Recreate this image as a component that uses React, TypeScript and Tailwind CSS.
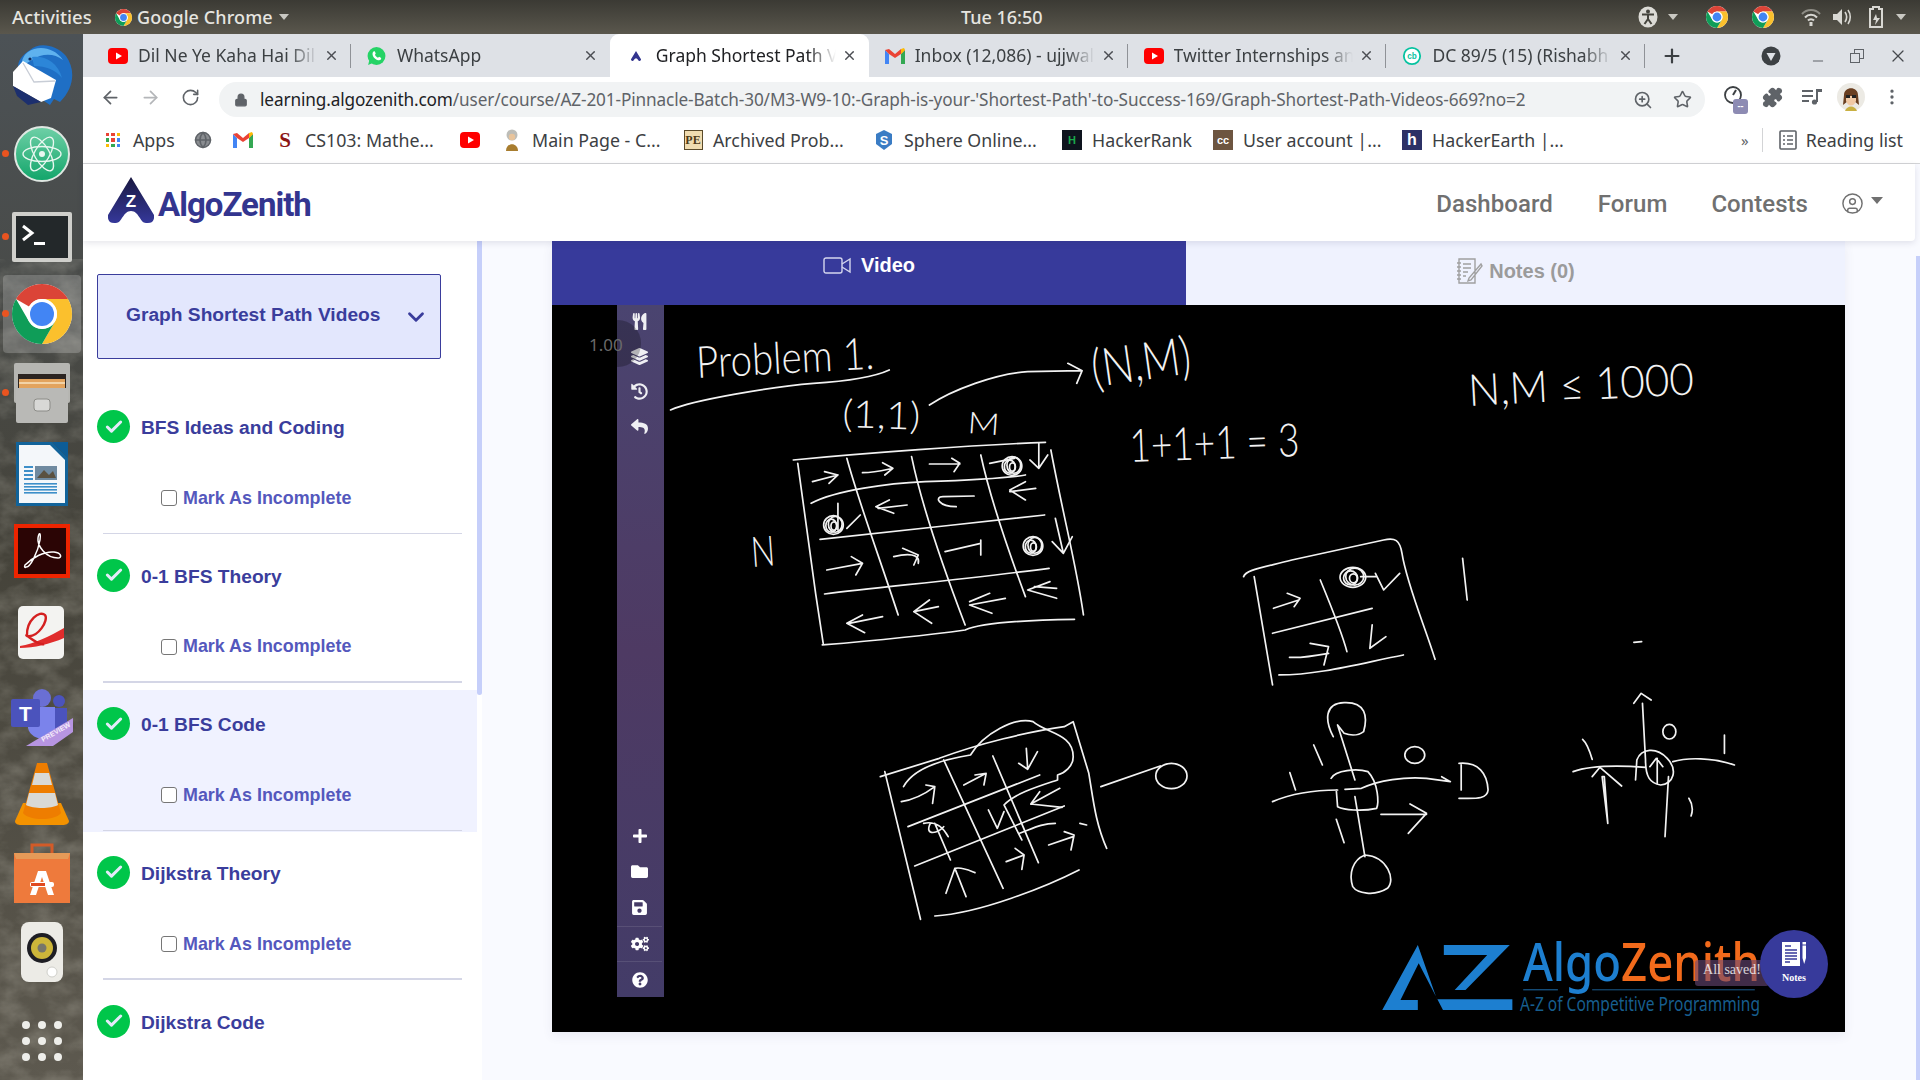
import React from 'react';
import { ArrowLeft, ArrowRight, RotateCw, Lock, ZoomIn, Star, Puzzle, MoreVertical, Globe, Check, X, Plus, ChevronDown, CircleUser, Minus } from 'lucide-react';
import { FaUtensils, FaLayerGroup, FaHistory, FaReply, FaPlus, FaFolder, FaSave, FaCogs, FaQuestionCircle } from 'react-icons/fa';

const ChromeLogo = ({ size = 20 }: { size?: number }) => (
  <svg width={size} height={size} viewBox="4 4 40 40">
    <circle cx="24" cy="24" r="20" fill="#fff" />
    <path d="M6.68 14A20 20 0 0 1 41.32 14H24A10 10 0 0 0 15.34 19Z" fill="#db4437" />
    <path d="M41.32 14A20 20 0 0 1 24 44L32.66 29A10 10 0 0 0 24 14Z" fill="#fbc02d" />
    <path d="M24 44A20 20 0 0 1 6.68 14L15.34 29A10 10 0 0 0 32.66 29Z" fill="#0f9d58" />
    <circle cx="24" cy="24" r="10" fill="#fff" />
    <circle cx="24" cy="24" r="8" fill="#4285f4" />
  </svg>
);
const YouTube = () => (
  <svg width="20" height="20" viewBox="0 0 20 20"><rect x="0" y="2" width="20" height="16" rx="4" fill="#f00" /><path d="M8 6.5 14 10 8 13.5Z" fill="#fff" /></svg>
);
const Gmail = () => (
  <svg width="20" height="16" viewBox="0 0 20 16"><path d="M0 2V16H4V6Z" fill="#4285f4" /><path d="M20 2V16H16V6Z" fill="#34a853" /><path d="M16 1 20 2 16 6 10 10 4 6 0 2 4 1 10 6Z" fill="#ea4335" /><path d="M16 1 19 0 20 2 16 6Z" fill="#fbbc04" /></svg>
);
const Whatsapp = () => (
  <svg width="19" height="20" viewBox="0 0 20 20"><circle cx="10" cy="10" r="9.4" fill="#25d366" /><path d="M1.2 19.5 2.6 14 6 17.4Z" fill="#25d366" /><path d="M6.8 5.2 8.2 5 9.2 7.4 8.4 8.6C9 10 10.2 11.2 11.6 11.8L12.7 10.8 15 12 14.6 13.6C13.4 15 11 14.6 8.6 12.8 6.2 11 4.8 7.4 6.8 5.2Z" fill="#fff" /></svg>
);
const AMark = () => (
  <svg width="10" height="12" viewBox="0 0 46 47"><path d="M23 0 0 38Q-1 47 8 46C14 46 15 34 23 34 31 34 32 46 38 46Q47 47 46 38Z" fill="#33358f" /></svg>
);
const CB = () => (
  <svg width="22" height="22" viewBox="0 0 22 22"><circle cx="11" cy="11" r="9" fill="#fff" stroke="#06c2a0" strokeWidth="2" /><text x="11" y="14" textAnchor="middle" fontSize="9" fontWeight="700" fill="#06c2a0" fontFamily="Liberation Sans">cb</text></svg>
);

const tabs = [
  { icon: <YouTube />, t: 'Dil Ne Ye Kaha Hai Dil Se', sep: true },
  { icon: <Whatsapp />, t: 'WhatsApp', sep: false },
  { icon: <AMark />, t: 'Graph Shortest Path Videos', active: true, sep: false },
  { icon: <Gmail />, t: 'Inbox (12,086) - ujjwal', sep: true },
  { icon: <YouTube />, t: 'Twitter Internships and', sep: true },
  { icon: <CB />, t: 'DC 89/5 (15) (Rishabh Pant', sep: true },
];

const TopBar = () => (
  <div className="h-[34px] shrink-0 flex items-center bg-gradient-to-b from-[#3b3a34] to-[#5a574d] text-[#e6e5e0] text-[18px] font-medium relative">
    <span className="ml-[12px] w-[103px] text-[18.5px]">Activities</span>
    <ChromeLogo size={17} />
    <span className="ml-[5px] tracking-[0.1px]">Google Chrome</span>
    <svg width="10" height="6" className="ml-[6px]" viewBox="0 0 10 6"><path d="M0 0H10L5 6Z" fill="#c9c8c2" /></svg>
    <span className="absolute left-[961px] top-[4px]">Tue 16:50</span>
    <div className="ml-auto flex items-center pr-[14px]">
      <svg width="20" height="22" viewBox="0 0 20 22"><ellipse cx="10" cy="11" rx="9.5" ry="10.5" fill="#dcdbd6" /><circle cx="10" cy="5.5" r="2" fill="#45443d" /><path d="M4 8.5H16M10 8.5V13L6.5 18M10 13 13.5 18" stroke="#45443d" strokeWidth="2" fill="none" /></svg>
      <svg width="10" height="6" className="ml-[10px]" viewBox="0 0 10 6"><path d="M0 0H10L5 6Z" fill="#c9c8c2" /></svg>
      <div className="ml-[28px]"><ChromeLogo size={22} /></div>
      <div className="ml-[24px]"><ChromeLogo size={22} /></div>
      <svg width="20" height="20" className="ml-[27px]" viewBox="0 0 20 20"><path d="M1 7A12 12 0 0 1 19 7" stroke="#8e8d86" strokeWidth="2" fill="none" /><path d="M4 10.5A8 8 0 0 1 16 10.5" stroke="#d9d8d3" strokeWidth="2" fill="none" /><path d="M7 13.5A4 4 0 0 1 13 13.5" stroke="#d9d8d3" strokeWidth="2" fill="none" /><rect x="8.5" y="15" width="3" height="4" fill="#d9d8d3" /></svg>
      <svg width="20" height="20" className="ml-[11px]" viewBox="0 0 20 20"><path d="M1 7H5L10 2V18L5 13H1Z" fill="#d9d8d3" /><path d="M13 5C15 8 15 12 13 15M16 3C19 7 19 13 16 17" stroke="#d9d8d3" strokeWidth="1.6" fill="none" /></svg>
      <svg width="18" height="24" className="ml-[15px]" viewBox="0 0 18 24"><path d="M6 2H12V4H15V22H3V4H6Z" fill="none" stroke="#d9d8d3" strokeWidth="2" /><path d="M9 9 6 15H9L8 20 13 13H10Z" fill="#d9d8d3" /></svg>
      <svg width="10" height="6" className="ml-[11px]" viewBox="0 0 10 6"><path d="M0 0H10L5 6Z" fill="#c9c8c2" /></svg>
    </div>
  </div>
);

const Slot = ({ children, dot, cls = '' }: { children: React.ReactNode; dot?: boolean; cls?: string }) => (
  <div className={`h-[80px] shrink-0 w-full flex items-center justify-center relative ${cls}`}>
    {dot && <span className="absolute left-[2px] top-[36px] w-[7px] h-[7px] rounded-full bg-[#e95420]" />}
    {children}
  </div>
);

const Dock = () => (
  <div className="w-[83px] shrink-0 relative overflow-hidden bg-gradient-to-b from-[#4c5256] via-[#45433a] to-[#5d594f]">
    <svg className="absolute inset-0 opacity-30" width="83" height="1046">
      <filter id="rock"><feTurbulence type="fractalNoise" baseFrequency="0.035 0.05" numOctaves="4" seed="8" /><feColorMatrix values="0 0 0 0 .62 0 0 0 0 .60 0 0 0 0 .52 1.6 0 0 0 -.55" /></filter>
      <rect y="300" width="83" height="746" filter="url(#rock)" />
    </svg>
    <div className="relative flex flex-col items-center">
      <Slot>
        <svg width="64" height="64" viewBox="0 0 64 64">
          <path d="M20 8C28 0 46 2 56 14 66 28 64 46 50 60L44 57 40 63 34 59 10 30C4 20 14 12 20 8Z" fill="#1f6fc5" />
          <path d="M18 10C28 3 44 5 53 18 44 11 32 11 22 18L12 24C11 18 14 13 18 10Z" fill="#5fb2ee" />
          <path d="M22 15C34 13 48 20 52 36 46 28 36 24 24 24Z" fill="#2c86d8" />
          <circle cx="20" cy="17" r="1.6" fill="#10285c" />
          <path d="M3 30 13 19 46 38 41 56 31 60 3 44Z" fill="#fff" />
          <path d="M13 21 24 40 45 39" fill="none" stroke="#c8cdd6" strokeWidth="1.3" />
          <path d="M3 44 31 60 18 63 7 54Z" fill="#1c2f6e" />
        </svg>
      </Slot>
      <Slot dot>
        <svg width="56" height="56" viewBox="0 0 56 56">
          <defs><linearGradient id="atomg" x1="0" y1="0" x2="0" y2="1"><stop offset="0" stopColor="#6fd0a7" /><stop offset="1" stopColor="#12a56a" /></linearGradient></defs>
          <circle cx="28" cy="28" r="27" fill="url(#atomg)" stroke="#dfe7e2" strokeWidth="2" />
          <g fill="none" stroke="#e9f7f0" strokeWidth="1.4"><ellipse cx="28" cy="28" rx="19" ry="7.5" transform="rotate(60 28 28)" /><ellipse cx="28" cy="28" rx="19" ry="7.5" transform="rotate(-60 28 28)" /><ellipse cx="28" cy="28" rx="19" ry="7.5" /></g>
          <circle cx="28" cy="28" r="3" fill="#e9f7f0" />
        </svg>
      </Slot>
      <Slot dot cls="top-[3px]">
        <svg width="60" height="50" viewBox="0 0 60 50">
          <rect x="0" y="0" width="60" height="50" rx="2" fill="#cfcfcb" /><rect x="4" y="4" width="52" height="42" fill="#23282a" />
          <path d="M11 14 20 21 11 28" fill="none" stroke="#fff" strokeWidth="3" /><rect x="22" y="30" width="11" height="3" fill="#fff" />
        </svg>
      </Slot>
      <Slot dot>
        <div className="w-[78px] h-[78px] rounded-[4px] bg-white/20 flex items-center justify-center"><ChromeLogo size={60} /></div>
      </Slot>
      <Slot dot cls="-top-[1px]">
        <svg width="56" height="60" viewBox="0 0 56 60">
          <rect x="0" y="0" width="56" height="40" rx="2" fill="#b6b6b2" /><rect x="4" y="11" width="48" height="16" fill="#2c2521" />
          <rect x="5" y="16" width="46" height="12" fill="#e2a35d" /><path d="M5 20H51" stroke="#f7e3c0" strokeWidth="1.5" /><rect x="2" y="25" width="52" height="35" rx="2" fill="#b9b9b6" />
          <rect x="20" y="36" width="16" height="12" rx="3" fill="#d8d8d6" stroke="#8c8c88" />
        </svg>
      </Slot>
      <Slot>
        <svg width="52" height="64" viewBox="0 0 52 64">
          <path d="M0 0H36L52 16V64H0Z" fill="#12639a" /><path d="M3 3H34L49 18V61H3Z" fill="#f4f7fa" />
          <path d="M36 0H52V16Z" fill="#0d5c96" />
          <path d="M19 24H41V38H19Z" fill="#6f8aa0" /><path d="M21 36 28 28 33 33 37 29 40 36Z" fill="#5a5140" />
          {[24, 28, 32, 36].map((y) => <rect key={y} x="8" y={y} width="9" height="2" fill="#3d8fc9" />)}
          {[41, 44, 47, 50].map((y) => <rect key={y} x="8" y={y} width="33" height="1.6" fill="#3d8fc9" />)}
        </svg>
      </Slot>
      <Slot cls="-top-[3px]">
        <svg width="56" height="54" viewBox="0 0 56 54">
          <rect width="56" height="54" fill="#ee2400" /><rect x="4" y="4" width="48" height="46" fill="#2b0505" />
          <path d="M12 43C16 44 24 28 26 16 27 8 25 8 24 14 23 22 32 34 44 34 48 34 48 29 40 28 30 27 18 34 11 41 10 43 11 44 12 43Z" fill="none" stroke="#fff" strokeWidth="1.5" />
        </svg>
      </Slot>
      <Slot cls="-top-[1px]">
        <svg width="48" height="54" viewBox="0 0 48 54">
          <rect width="46" height="53" rx="5" fill="#f3f3f1" /><path d="M2 40C16 38 32 30 46 22V32C32 38 16 42 2 42Z" fill="#e02c2c" />
          <path d="M9 30C8 14 22 4 27 9 31 14 20 32 9 30 5 26 20 40 26 38" fill="none" stroke="#d42020" strokeWidth="2.4" />
        </svg>
      </Slot>
      <Slot cls="top-[3px]">
        <svg width="62" height="58" viewBox="0 0 62 58">
          <circle cx="31" cy="10" r="9" fill="#6a6fd4" /><circle cx="48" cy="13" r="6" fill="#4b53bc" />
          <path d="M40 20H56V44H40Z" fill="#4b53bc" /><path d="M17 19H44V44C44 54 20 54 17 40Z" fill="#7b83eb" />
          <rect x="0" y="11" width="29" height="28" rx="2" fill="#4b53bc" /><text x="14.5" y="33" textAnchor="middle" fontSize="21" fontWeight="700" fill="#fff" fontFamily="Liberation Sans">T</text>
          <path d="M15 58 62 30V44L42 58Z" fill="#b795e2" /><text x="0" y="0" fontSize="7" fontWeight="700" fill="#f3ecfb" fontFamily="Liberation Sans" transform="translate(32 54) rotate(-30)">PREVIEW</text>
        </svg>
      </Slot>
      <Slot>
        <svg width="54" height="62" viewBox="0 0 54 62">
          <path d="M0 58 8 40H46L54 58C54 61 50 62 48 62H6C3 62 0 61 0 58Z" fill="#f39200" />
          <path d="M22 0H32L46 50C40 58 14 58 8 50Z" fill="#ee7d00" />
          <path d="M20 10H34L37 22H17Z" fill="#d9d9d6" /><path d="M14 30H40L43 42C36 46 18 46 11 42Z" fill="#d9d9d6" />
        </svg>
      </Slot>
      <Slot cls="-top-[1px]">
        <svg width="56" height="60" viewBox="0 0 56 60">
          <path d="M18 14V2H38V14M18 14V4" fill="none" stroke="#d35b28" strokeWidth="3" />
          <rect y="10" width="56" height="50" fill="#ee7a3c" /><path d="M0 10H56L54 16H2Z" fill="#e59a58" />
          <path d="M16 52 24 28H32L40 52H34L28 34 22 52Z" fill="#fff" /><rect x="16" y="39" width="24" height="5" rx="2" fill="#fff" /><rect x="17" y="40" width="14" height="3" fill="#e04a20" />
        </svg>
      </Slot>
      <Slot cls="-top-[2px]">
        <svg width="42" height="60" viewBox="0 0 42 60">
          <rect width="42" height="60" rx="8" fill="#ecebe6" /><circle cx="21" cy="26" r="15" fill="#1e1e24" /><circle cx="21" cy="26" r="11" fill="#cdb63a" /><circle cx="21" cy="26" r="4.5" fill="#77766a" />
          <circle cx="31" cy="50" r="5" fill="#fff" stroke="#cfcfca" />
        </svg>
      </Slot>
      <Slot cls="top-[7px]">
        <div className="grid grid-cols-3 gap-[8px]">
          {Array.from({ length: 9 }).map((_, i) => <span key={i} className="w-[8px] h-[8px] rounded-full bg-[#eeeeea]" />)}
        </div>
      </Slot>
    </div>
  </div>
);

const Tabs = () => (
  <div className="h-[43px] shrink-0 bg-[#dee1e6] flex items-stretch pl-[9px] text-[#3c4043] text-[17.5px]">
    {tabs.map((tab) => (
      <div key={tab.t} className={`w-[258.9px] shrink-0 flex items-center pl-[16px] pr-[12px] relative ${tab.active ? 'bg-white text-[#202124] rounded-t-[9px]' : ''}`}>
        <span className="w-[20px] h-[20px] flex items-center justify-center shrink-0">{tab.icon}</span>
        <span className="ml-[10px] flex-1 overflow-hidden whitespace-nowrap [mask-image:linear-gradient(to_right,black_84%,transparent)]">{tab.t}</span>
        <X size={15} strokeWidth={2.2} className="ml-[6px] text-[#4a4d52] shrink-0" />
        {tab.sep && <span className="absolute right-0 top-[10px] h-[24px] w-[1px] bg-[#8f9297]" />}
      </div>
    ))}
    <div className="flex items-center pl-[16px]"><Plus size={22} strokeWidth={2.4} className="text-[#3c4043]" /></div>
    <div className="ml-auto flex items-center pr-[12px]">
      <svg width="20" height="20" viewBox="0 0 20 20"><circle cx="10" cy="10" r="9.5" fill="#3c4043" /><path d="M5.5 7H14.5L10 15Z" fill="#dee1e6" /></svg>
      <Minus size={16} className="ml-[29px] text-[#5f6368] mt-[11px]" strokeWidth={1.5} />
      <svg width="14" height="14" className="ml-[24px]" viewBox="0 0 14 14"><rect x="4.5" y="0.5" width="9" height="9" fill="none" stroke="#5f6368" /><rect x="0.5" y="4.5" width="9" height="9" fill="#dee1e6" stroke="#5f6368" /></svg>
      <X size={20} strokeWidth={1.5} className="ml-[24px] text-[#45484d]" />
    </div>
  </div>
);

const Toolbar = () => (
  <div className="h-[40px] shrink-0 bg-white flex items-center relative">
    <ArrowLeft size={21} className="ml-[17px] text-[#5f6368]" />
    <ArrowRight size={21} className="ml-[19px] text-[#b4b6b9]" />
    <RotateCw size={19} className="ml-[20px] text-[#5f6368]" />
    <div className="ml-[19px] w-[1486px] h-[35px] mt-[5px] rounded-full bg-[#f1f3f4] flex items-center">
      <Lock size={14} className="ml-[15px] text-[#5f6368]" fill="#5f6368" />
      <span className="ml-[12px] text-[17.2px] text-[#5f6368] whitespace-nowrap w-[1265px] tracking-[-0.12px] overflow-hidden"><span className="text-[#202124]">learning.algozenith.com</span>/user/course/AZ-201-Pinnacle-Batch-30/M3-W9-10:-Graph-is-your-'Shortest-Path'-to-Success-169/Graph-Shortest-Path-Videos-669?no=2</span>
      <ZoomIn size={20} className="ml-[108px] text-[#5f6368]" />
      <Star size={19} className="ml-[20px] text-[#5f6368]" />
    </div>
    <div className="ml-[18px] relative w-[22px] h-[24px]">
      <svg width="22" height="22" viewBox="0 0 22 22"><circle cx="10" cy="10" r="8" fill="none" stroke="#3c4043" strokeWidth="1.8" /><path d="M10 10 13 5" stroke="#3c4043" strokeWidth="2" /></svg>
      <span className="absolute left-[10px] top-[14px] w-[15px] h-[15px] rounded-[3px] bg-[#8d8bb3] text-white text-[9px] leading-[14px] text-center font-bold">--</span>
    </div>
    <Puzzle size={21} className="ml-[17px] text-[#5f6368]" fill="#5f6368" />
    <svg width="22" height="22" className="ml-[18px]" viewBox="0 0 22 22"><path d="M1 5H12M1 10H12M1 15H8" stroke="#5f6368" strokeWidth="2" /><path d="M16 3V16" stroke="#5f6368" strokeWidth="2" /><circle cx="13.5" cy="16" r="2.6" fill="#5f6368" /><path d="M16 3H21V6H16Z" fill="#5f6368" /></svg>
    <svg width="28" height="28" className="ml-[14px]" viewBox="0 0 28 28"><circle cx="14" cy="14" r="14" fill="#eceae4" /><path d="M7 12C7 3 21 3 21 12L22 22 17 18H11L6 22Z" fill="#6a3f21" /><path d="M9 13H19V18C17 24 11 24 9 18Z" fill="#f1c9a5" /><rect x="9" y="12" width="4" height="3" fill="#222" /><rect x="15" y="12" width="4" height="3" fill="#222" /><path d="M8 28C10 22 18 22 20 28Z" fill="#c9b042" /></svg>
    <MoreVertical size={20} className="ml-[17px] text-[#5f6368]" />
  </div>
);

const BM = ({ icon, t, w }: { icon: React.ReactNode; t?: string; w?: string }) => (
  <div className={`flex items-center gap-[10px] shrink-0 ${w ?? ''}`}>
    <span className="w-[20px] h-[20px] flex items-center justify-center shrink-0">{icon}</span>
    {t && <span className="whitespace-nowrap">{t}</span>}
  </div>
);
const Sq = ({ bg, fg, t, cls = '' }: { bg: string; fg: string; t: string; cls?: string }) => (
  <span className={`w-[20px] h-[20px] flex items-center justify-center text-[11px] font-bold font-['Liberation_Sans',sans-serif] ${cls}`} style={{ background: bg, color: fg }}>{t}</span>
);
const Bookmarks = () => (
  <div className="h-[47px] shrink-0 bg-white border-b border-[#d3d4d6] flex items-center text-[17.8px] text-[#3c4043] pl-[20px]">
    <BM w="w-[90px]" t="Apps" icon={
      <div className="grid grid-cols-3 gap-[2px]">
        {['#ea4335', '#ea4335', '#fbbc04', '#34a853', '#ea4335', '#4285f4', '#fbbc04', '#34a853', '#4285f4'].map((c, i) => <span key={i} className="w-[3.5px] h-[3.5px]" style={{ background: c }} />)}
      </div>} />
    <BM w="w-[40px]" icon={<Globe size={18} className="text-[#5f6368]" fill="#8a8d91" />} />
    <BM w="w-[42px]" icon={<Gmail />} />
    <BM w="w-[185px]" t="CS103: Mathe..." icon={<span className="text-[#8c1515] font-bold text-[21px] leading-none font-['Liberation_Serif',serif]">S</span>} />
    <BM w="w-[42px]" icon={<YouTube />} />
    <BM w="w-[181px]" t="Main Page - C..." icon={
      <svg width="18" height="22" viewBox="0 0 18 22"><circle cx="9" cy="6" r="5.5" fill="#bdbdb8" /><circle cx="9" cy="8" r="3.2" fill="#e8c49c" /><path d="M3 22C3 13 15 13 15 22Z" fill="#a87d2f" /></svg>} />
    <BM w="w-[191px]" t="Archived Prob..." icon={
      <span className="w-[19px] h-[20px] border border-[#5a4a2a] bg-[#f0dcb0] text-[#4d3a16] text-[12px] font-bold leading-[18px] text-center font-['Liberation_Serif',serif]">PE</span>} />
    <BM w="w-[188px]" t="Sphere Online..." icon={
      <svg width="18" height="20" viewBox="0 0 18 20"><path d="M9 0 17 4V14L9 20 1 14V4Z" fill="#3a7cc4" /><text x="9" y="15" textAnchor="middle" fill="#fff" fontSize="13" fontWeight="700" fontFamily="Liberation Sans">S</text></svg>} />
    <BM w="w-[151px]" t="HackerRank" icon={<Sq bg="#0e141e" fg="#1ba94c" t="H" />} />
    <BM w="w-[189px]" t="User account |..." icon={<Sq bg="#6d5540" fg="#fff" t="cc" />} />
    <BM t="HackerEarth |..." icon={<Sq bg="#2c3166" fg="#fff" t="h" cls="!text-[16px]" />} />
    <span className="ml-auto text-[#5f6368] text-[15px]">»</span>
    <span className="ml-[13px] w-[1px] h-[24px] bg-[#d3d4d6]" />
    <svg width="18" height="20" className="ml-[16px]" viewBox="0 0 18 20"><rect x="1" y="1" width="16" height="18" rx="1" fill="none" stroke="#5f6368" strokeWidth="1.6" /><path d="M4 6H6M8 6H14M4 10H6M8 10H14M4 14H6M8 14H14" stroke="#5f6368" strokeWidth="1.6" /></svg>
    <span className="ml-[9px] pr-[17px] whitespace-nowrap">Reading list</span>
  </div>
);

const Header = () => (
  <div className="h-[77px] shrink-0 relative z-10 bg-white flex items-center pl-[25px] pr-[32px] mr-[5px] rounded-br-[4px] shadow-[0_2px_6px_rgba(40,40,80,0.12)]">
    <svg width="46" height="47" viewBox="0 0 46 47" className="-mt-[4px]">
      <defs><linearGradient id="amk" x1="0" y1="0" x2="0" y2="1"><stop offset="0" stopColor="#191840" /><stop offset="1" stopColor="#35389a" /></linearGradient></defs>
      <path d="M23 0 0 38Q-1 47 8 46C14 46 15 34 23 34 31 34 32 46 38 46Q47 47 46 38Z" fill="url(#amk)" />
      <text x="23" y="30" textAnchor="middle" fontSize="17" fontWeight="700" fill="#fff" fontFamily="Liberation Sans">Z</text>
    </svg>
    <span className="ml-[4px] mt-[4px] text-[#33358f] text-[33px] font-bold tracking-[-1px] font-['Roboto',sans-serif]">AlgoZenith</span>
    <div className="ml-auto mt-[2px] flex items-center text-[#707070] text-[24px] font-medium tracking-[0.05px] font-['Roboto',sans-serif]">
      <span>Dashboard</span>
      <span className="ml-[45px]">Forum</span>
      <span className="ml-[44px]">Contests</span>
      <CircleUser size={23} strokeWidth={1.5} className="ml-[33px] -mt-[1px]" />
      <svg width="12" height="7" className="ml-[7px] -mt-[6px]" viewBox="0 0 12 7"><path d="M0 0H12L6 7Z" fill="#707070" /></svg>
    </div>
  </div>
);

const items = ['BFS Ideas and Coding', '0-1 BFS Theory', '0-1 BFS Code', 'Dijkstra Theory', 'Dijkstra Code'];

const Sidebar = () => (
  <div className="w-[399px] shrink-0 h-full bg-white relative overflow-hidden font-['Liberation_Sans',sans-serif]">
    <div className="pt-[33px] pr-[5px]">
      <div className="ml-[14px] w-[344px] h-[85px] rounded-[2px] border border-[#3a3d9c] bg-[#e3e7fd] flex items-center pl-[28px] pb-[2px] text-[#3a3d9c] text-[19.2px] font-bold">
        Graph Shortest Path Videos
        <ChevronDown size={26} strokeWidth={2.6} className="ml-[23px] mt-[2px] shrink-0" />
      </div>
      <div className="mt-[34px] flex flex-col gap-[6.67px]">
        {items.map((t, i) => (
          <div key={t} className={`h-[142px] shrink-0 flex flex-col ${i === 2 ? 'bg-[#f0f2ff]' : ''}`}>
            <div className="ml-[14px] mt-[17px] h-[33px] flex items-center">
              <span className="w-[33px] h-[33px] rounded-full bg-[#00c64a] flex items-center justify-center"><Check size={20} strokeWidth={3.6} className="text-[#e4eafa]" /></span>
              <span className="ml-[11px] text-[19.2px] font-bold text-[#3a3d9c] mt-[4px]">{t}</span>
            </div>
            <div className="ml-[78px] mt-[47px] h-[16px] flex items-center">
              <span className="w-[16px] h-[16px] rounded-[3px] border-[1.5px] border-[#767676] bg-white" />
              <span className="ml-[6px] text-[17.9px] font-bold text-[#5458bd]">Mark As Incomplete</span>
            </div>
            <div className="ml-[20px] w-[359px] h-[1.5px] mt-auto mb-[1px] bg-[#d4d6e6]" />
          </div>
        ))}
      </div>
    </div>
    <div className="absolute right-0 top-0 w-[5px] h-[454px] bg-[#c6cffa] rounded-b-[3px]" />
  </div>
);

const S = { fill: 'none', stroke: '#f2f2f2', strokeWidth: 1.7, strokeLinecap: 'round' as const, strokeLinejoin: 'round' as const, vectorEffect: 'non-scaling-stroke' as const };
const P = ({ d }: { d: string }) => <path d={d} {...S} />;
const Scribble = ({ x, y, rx = 22, ry = 28 }: { x: number; y: number; rx?: number; ry?: number }) => (
  <g>
    <ellipse cx={x} cy={y} rx={rx} ry={ry} {...S} />
    <ellipse cx={x + 4} cy={y - 2} rx={rx * 0.7} ry={ry * 0.85} {...S} />
    <ellipse cx={x - 5} cy={y + 2} rx={rx * 0.55} ry={ry * 0.7} {...S} />
    <ellipse cx={x + 1} cy={y + 3} rx={rx * 0.3} ry={ry * 0.45} {...S} />
  </g>
);
const HW = ({ x, y, size, w, rot, children }: { x: number; y: number; size: number; w: number; rot: number; children: string }) => (
  <text x={x} y={y} fontSize={size} fontFamily="Lato, Open Sans, sans-serif" fontWeight={300} fill="#f2f2f2" textLength={w} lengthAdjust="spacingAndGlyphs" transform={`rotate(${rot} ${x} ${y})`}>{children}</text>
);

const Board = () => (
  <svg className="absolute inset-0" width="1293" height="727" viewBox="552 305 1293 727">
    <HW x={697} y={378} size={44} w={178} rot={-3}>Problem 1.</HW>
    <HW x={1094} y={387} size={52} w={100} rot={-8}>(N,M)</HW>
    <HW x={842} y={427} size={38} w={78} rot={2}>(1,1)</HW>
    <HW x={967} y={433} size={30} w={32} rot={4}>M</HW>
    <HW x={752} y={567} size={42} w={24} rot={-4}>N</HW>
    <HW x={1130} y={462} size={46} w={170} rot={-2}>1+1+1 = 3</HW>
    <HW x={1469} y={406} size={44} w={226} rot={-3}>N,M ≤ 1000</HW>

    <g transform="translate(550 300) scale(0.4464 0.3333)">
      <P d="M270 330C320 300 500 260 590 250 650 245 720 235 760 210" />
      <P d="M850 315C900 270 1000 220 1070 215L1190 212M1160 190 1192 212 1180 250" />
      <P d="M545 480C700 460 950 435 1110 427" />
      <P d="M585 610C640 570 760 550 840 545 950 540 1020 535 1065 525" />
      <P d="M605 718C750 695 950 670 1108 645" />
      <P d="M615 882C750 860 950 835 1118 805" />
      <P d="M610 1035C700 1025 850 1005 930 990 970 965 1080 960 1175 958" />
      <P d="M555 490 595 880 612 1030" />
      <P d="M665 475C690 600 740 780 780 945" />
      <P d="M810 470C830 600 880 800 930 975" />
      <P d="M965 465C990 620 1040 800 1065 890" />
      <P d="M1122 450C1150 650 1180 800 1195 945" />
      <P d="M588 545 645 525M615 515 645 525 625 550" />
      <P d="M700 518C730 518 750 510 768 505M745 488 768 505 750 525" />
      <P d="M850 492H918M900 475 918 490 905 515" />
      <P d="M985 490 1040 475" />
      <Scribble x={1035} y={498} />
      <P d="M1095 430V505M1075 480 1095 505 1115 465" />
      <P d="M800 615 735 625M760 600 730 620 770 640" />
      <P d="M950 588 880 590C860 590 870 620 910 620" />
      <P d="M1088 565 1030 575M1065 545 1030 570 1065 600" />
      <Scribble x={635} y={675} />
      <P d="M645 610V690M665 685 695 645" />
      <P d="M620 810 700 790M675 770 700 790 685 825" />
      <P d="M770 770C800 760 830 760 825 790M790 745 825 765 815 795" />
      <P d="M885 755 965 730M965 720V765" />
      <Scribble x={1082} y={738} />
      <P d="M1132 655 1150 760M1125 725 1150 760 1170 710" />
      <P d="M745 950 670 970M700 945 665 970 705 998" />
      <P d="M870 920 815 935 855 970M815 935 850 900" />
      <P d="M1020 895 940 915 990 940M940 905 985 880" />
      <P d="M1135 865 1085 860M1120 845 1070 870 1135 895" />
    </g>

    <g transform="translate(1200 300) scale(0.4591 0.3333)">
      <P d="M95 830C100 810 130 805 200 780L400 720C425 712 435 720 440 760 450 850 490 980 512 1078" />
      <P d="M118 830 158 1155" />
      <P d="M158 1000 375 925" />
      <P d="M172 1125C260 1125 350 1090 443 1065" />
      <P d="M262 840C280 900 310 1000 320 1055" />
      <P d="M160 925 215 900M190 880 218 895 205 920" />
      <Scribble x={333} y={832} rx={28} ry={30} />
      <P d="M350 830H385M382 820 400 870 435 820" />
      <P d="M195 1072C220 1075 260 1065 280 1060M240 1030 280 1040 270 1095" />
      <P d="M375 975 370 1045 405 1010" />
      <P d="M572 775 582 900" />
      <P d="M945 1027 962 1025" />
    </g>

    <g transform="translate(600 680) scale(0.4464 0.3333)">
      <P d="M628 290 760 235C850 190 960 155 1040 140L1060 125 1095 280C1105 360 1110 430 1135 505" />
      <P d="M638 275 718 718" />
      <P d="M690 440 985 285" />
      <P d="M705 558 1040 378" />
      <P d="M750 708C850 700 1000 620 1073 570" />
      <P d="M770 240 903 625" />
      <P d="M880 228 982 548" />
      <P d="M680 320C700 270 760 240 830 225 860 160 930 110 970 125 1000 160 1060 160 1060 230 1060 260 1040 280 1025 285L1025 300C980 320 930 340 905 375L945 480" />
      <P d="M675 365C700 360 730 340 750 320M730 315 750 320 745 370" />
      <P d="M815 315 865 280M840 285 865 280 860 315" />
      <P d="M955 205 958 265M938 250 958 268 980 215" />
      <P d="M1030 325 965 372 1035 382M985 335 965 372" />
      <P d="M870 390 890 445 905 395" />
      <P d="M740 430C725 470 760 460 770 440M750 430 785 540M725 430Q760 420 780 470" />
      <P d="M910 545 950 525M930 505 950 525 945 568" />
      <P d="M940 460C970 445 990 430 1020 430" />
      <P d="M1005 495 1060 470M1040 455 1062 465 1055 510" />
      <P d="M775 640 795 565 820 650M795 565C810 560 825 570 840 578" />
      <P d="M1075 430 1090 435" />
      <P d="M1122 320 1255 258" />
      <ellipse cx="1280" cy="288" rx="35" ry="38" {...S} />
    </g>

    <g transform="translate(1240 680) scale(0.4337 0.3333)">
      <P d="M215 170C195 120 195 70 240 68 290 65 295 110 285 155 270 170 250 165 240 160L225 135 265 300" />
      <P d="M210 295C220 270 270 265 295 275 320 310 320 370 315 385 280 395 240 390 225 380L222 330M75 365C120 340 170 330 225 330" />
      <P d="M242 328 280 325C320 300 380 290 430 295L485 305M465 290 485 305" />
      <P d="M265 350 288 530" />
      <P d="M288 525C340 530 360 600 340 625 310 650 270 640 260 620 250 580 260 540 288 525" />
      <P d="M505 250C550 245 570 280 572 330 570 360 540 355 505 355M510 250V330" />
      <ellipse cx="403" cy="225" rx="23" ry="25" {...S} />
      <P d="M170 195 190 255M115 278 128 330M222 418 240 488" />
      <P d="M325 403H430M392 372 430 400 388 460" />
      <P d="M768 275C800 260 860 255 935 262" />
      <P d="M912 300 915 240C925 205 960 200 985 235 1010 270 1000 310 970 315 945 310 935 290 935 240L928 70M908 70 925 40 948 60" />
      <P d="M962 310V235M945 260 960 235 975 260" />
      <P d="M998 245C1030 232 1090 232 1140 255" />
      <P d="M988 290 980 470" />
      <P d="M812 290 830 262 880 318" />
      <P d="M848 430 840 290 835 290 848 430" />
      <ellipse cx="990" cy="155" rx="15" ry="22" {...S} />
      <P d="M790 178C800 190 808 220 812 238M1117 165V220M1035 355C1045 375 1045 390 1040 408" />

      <path fill="#1d7fd0" d="M410 795 328 990H410V960H370L412 850 468 990H628V958H455L452 950ZM470 795H622L520 930H495L570 825H470Z" />
      <rect x="653" y="928" width="80" height="3" fill="#1d6ba8" />
      <rect x="812" y="928" width="375" height="3" fill="#1a5a8c" />
    </g>
    <text x="1523" y="981" fontSize="52" fontWeight="500" fontFamily="Noto Sans, sans-serif" textLength="237" lengthAdjust="spacingAndGlyphs"><tspan fill="#1d7fd0">Algo</tspan><tspan fill="#f26a1b">Zenith</tspan></text>
    <text x="1520" y="1011" fontSize="20" fontFamily="Noto Sans, sans-serif" fill="#175e8e" textLength="240" lengthAdjust="spacingAndGlyphs">A-Z of Competitive Programming</text>
  </svg>
);

const tools1 = [FaUtensils, FaLayerGroup, FaHistory, FaReply];

const Main = () => (
  <div className="flex-1 h-full bg-[#f9faff] pl-[70px] relative font-['Liberation_Sans',sans-serif]">
    <div className="w-[1293px] shadow-[0_4px_10px_rgba(60,60,120,0.08)]">
      <div className="h-[64px] flex">
        <div className="w-[634px] bg-[#373a9b] flex items-center justify-center text-white text-[20px] font-bold pb-[16px]">
          <svg width="28" height="17" viewBox="0 0 28 17" className="mr-[10px]"><rect x="1" y="1" width="18" height="15" rx="2" fill="none" stroke="#d5d6ee" strokeWidth="1.4" /><path d="M19 7 27 2V15L19 10" fill="none" stroke="#d5d6ee" strokeWidth="1.4" /></svg>
          Video
        </div>
        <div className="flex-1 bg-[#eff2fe] flex items-center justify-center text-[#9b9b9b] text-[20px] font-bold pb-[4px]">
          <svg width="27" height="27" viewBox="0 0 27 27" className="mr-[6px]"><path d="M3 1H19V25H3ZM1 5H5M1 9H5M1 13H5M1 17H5M1 21H5M7 6H15M7 10H15M7 14H12M7 18H10M25 6 13 20 12 23 15 22 26 8Z" fill="none" stroke="#a0a0a0" strokeWidth="1.4" /></svg>
          Notes (0)
        </div>
      </div>
      <div className="h-[727px] bg-black relative overflow-hidden">
        <div className="absolute left-[65px] top-0 w-[47px] h-[692px] bg-gradient-to-b from-[#4a4470] via-[#4e3a63] to-[#433c68] flex flex-col items-center text-white pr-[2px]">
          <div className="flex flex-col items-center pt-[8px] gap-[18px]">
            {tools1.map((I, i) => <I key={i} size={17} className="text-[#efeff3]" />)}
          </div>
          <div className="mt-auto w-full flex flex-col items-center">
            <div className="flex flex-col items-center gap-[19px] pb-[10px]">
              <FaPlus size={16} /><FaFolder size={17} /><FaSave size={17} />
            </div>
            <div className="w-full border-t border-white/10 flex items-center justify-center h-[35px]"><FaCogs size={18} /></div>
            <div className="w-full border-t border-white/10 flex items-center justify-center h-[36px]"><FaQuestionCircle size={16} /></div>
          </div>
        </div>
        <div className="absolute left-[43px] top-[15px] w-[46px] h-[47px] rounded-full bg-black/25" />
        <span className="absolute left-[37px] top-[27px] text-[17px] text-[#6a6a6a] font-['Noto_Sans',sans-serif]">1.00</span>
        <Board />
        <div className="absolute left-[1143px] top-[655px] w-[74px] h-[26px] rounded-[3px] bg-[#6a4a78]/60 text-white/80 text-[14px] font-['Liberation_Serif',serif] flex items-center justify-center pb-[8px]">All saved!</div>
        <div className="absolute left-[1208px] top-[625px] w-[68px] h-[68px] rounded-full bg-[#373a9b] flex flex-col items-center justify-center text-white">
          <svg width="25" height="26" viewBox="0 0 25 26" className="-mt-[2px]"><rect width="18" height="24" fill="#fff" /><path d="M3 4H9M3 8H15M3 11H15M3 14H15M3 17H15M3 20H8" stroke="#373a9b" strokeWidth="1.3" /><path d="M20.5 0H24V16L22.2 22 20.5 16Z" fill="#fff" /><path d="M20 3H25" stroke="#373a9b" /></svg>
          <span className="text-[10px] font-bold mt-[2px] font-['Liberation_Serif',serif]">Notes</span>
        </div>
      </div>
    </div>
    <div className="absolute right-0 top-[15px] bottom-0 w-[4px] bg-[#c6cffa]" />
  </div>
);

export default function App() {
  return (
    <div className="w-[1920px] h-[1080px] overflow-hidden flex flex-col bg-[#f9faff] font-['Noto_Sans',sans-serif]">
      <TopBar />
      <div className="flex-1 min-h-0 flex">
        <Dock />
        <div className="flex-1 min-w-0 flex flex-col">
          <Tabs />
          <Toolbar />
          <Bookmarks />
          <Header />
          <div className="flex-1 min-h-0 flex">
            <Sidebar />
            <Main />
          </div>
        </div>
      </div>
    </div>
  );
}
